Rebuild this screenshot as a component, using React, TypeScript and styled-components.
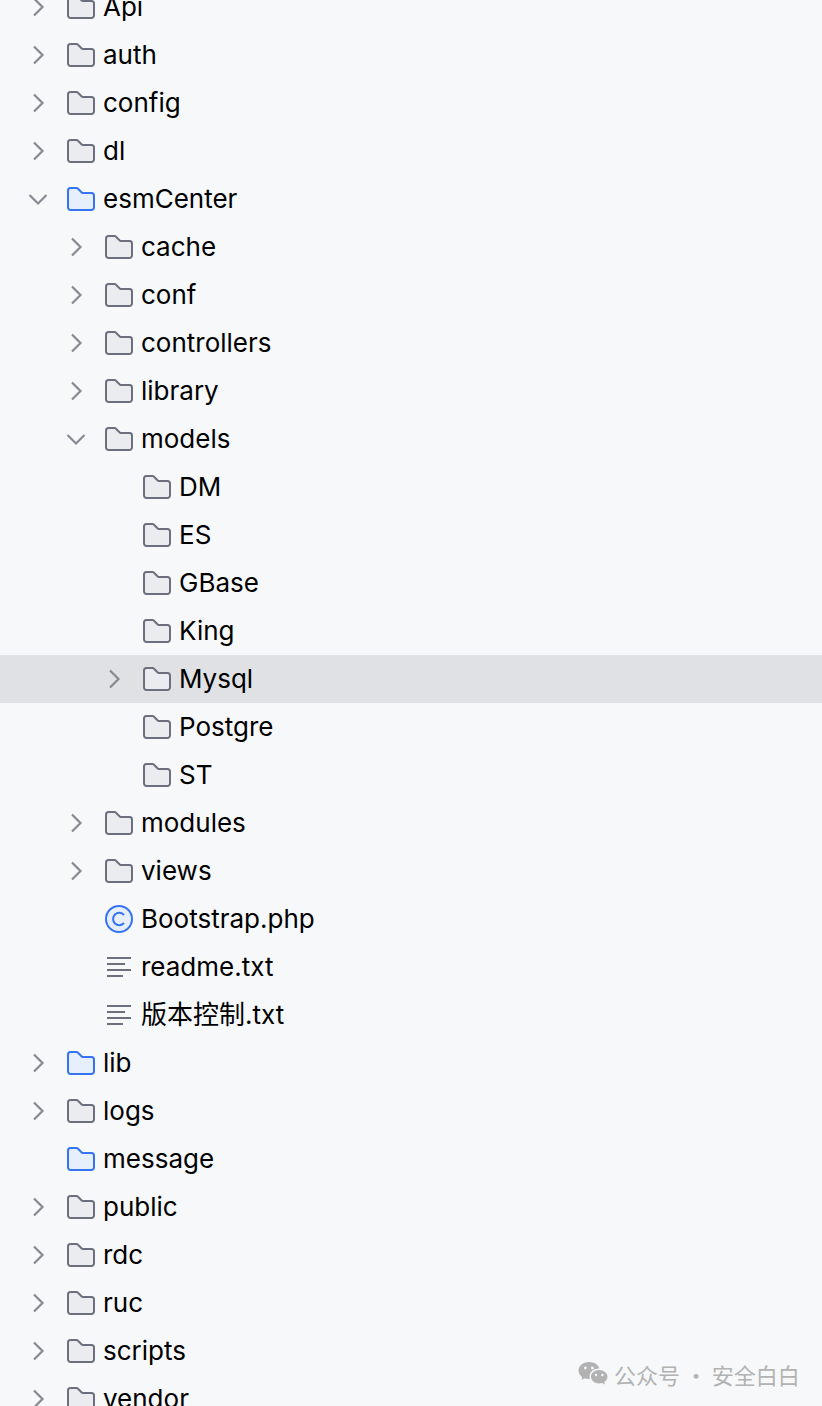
import styled, { createGlobalStyle } from "styled-components";

type Kind = "folder" | "source" | "php" | "text";
type Arrow = "closed" | "open" | "none";

type Item = {
  name: string;
  depth: number;
  arrow: Arrow;
  kind: Kind;
  selected?: boolean;
};

const items: Item[] = [
  { name: "Api", depth: 0, arrow: "closed", kind: "folder" },
  { name: "auth", depth: 0, arrow: "closed", kind: "folder" },
  { name: "config", depth: 0, arrow: "closed", kind: "folder" },
  { name: "dl", depth: 0, arrow: "closed", kind: "folder" },
  { name: "esmCenter", depth: 0, arrow: "open", kind: "source" },
  { name: "cache", depth: 1, arrow: "closed", kind: "folder" },
  { name: "conf", depth: 1, arrow: "closed", kind: "folder" },
  { name: "controllers", depth: 1, arrow: "closed", kind: "folder" },
  { name: "library", depth: 1, arrow: "closed", kind: "folder" },
  { name: "models", depth: 1, arrow: "open", kind: "folder" },
  { name: "DM", depth: 2, arrow: "none", kind: "folder" },
  { name: "ES", depth: 2, arrow: "none", kind: "folder" },
  { name: "GBase", depth: 2, arrow: "none", kind: "folder" },
  { name: "King", depth: 2, arrow: "none", kind: "folder" },
  { name: "Mysql", depth: 2, arrow: "closed", kind: "folder", selected: true },
  { name: "Postgre", depth: 2, arrow: "none", kind: "folder" },
  { name: "ST", depth: 2, arrow: "none", kind: "folder" },
  { name: "modules", depth: 1, arrow: "closed", kind: "folder" },
  { name: "views", depth: 1, arrow: "closed", kind: "folder" },
  { name: "Bootstrap.php", depth: 1, arrow: "none", kind: "php" },
  { name: "readme.txt", depth: 1, arrow: "none", kind: "text" },
  { name: "版本控制.txt", depth: 1, arrow: "none", kind: "text" },
  { name: "lib", depth: 0, arrow: "closed", kind: "source" },
  { name: "logs", depth: 0, arrow: "closed", kind: "folder" },
  { name: "message", depth: 0, arrow: "none", kind: "source" },
  { name: "public", depth: 0, arrow: "closed", kind: "folder" },
  { name: "rdc", depth: 0, arrow: "closed", kind: "folder" },
  { name: "ruc", depth: 0, arrow: "closed", kind: "folder" },
  { name: "scripts", depth: 0, arrow: "closed", kind: "folder" },
  { name: "vendor", depth: 0, arrow: "closed", kind: "folder" },
];

const GlobalStyle = createGlobalStyle`
  html, body {
    margin: 0;
    padding: 0;
    background: #f7f8fa;
  }
`;

const Page = styled.div`
  position: relative;
  width: 822px;
  height: 1406px;
  overflow: hidden;
  background: #f7f8fa;
  font-family: Inter, "Noto Sans CJK SC", sans-serif;
`;

const Tree = styled.div`
  margin-top: -17px;
  display: flex;
  flex-direction: column;
`;

const Row = styled.div<{ $depth: number; $selected?: boolean }>`
  height: 48px;
  display: flex;
  align-items: center;
  padding-left: ${(p) => 24 + p.$depth * 38}px;
  background: ${(p) => (p.$selected ? "#dfe1e5" : "transparent")};
`;

const ArrowSlot = styled.div`
  width: 28px;
  height: 28px;
  margin-right: 14px;
  flex-shrink: 0;
  display: flex;
  align-items: center;
  justify-content: center;
  color: #868a91;
`;

const IconSlot = styled.div`
  width: 30px;
  height: 30px;
  margin-right: 7px;
  flex-shrink: 0;
  display: flex;
  align-items: center;
  justify-content: center;
`;

const Label = styled.span`
  font-size: 26px;
  line-height: 48px;
  color: #000;
  white-space: nowrap;
`;

const Watermark = styled.div`
  position: absolute;
  left: 578px;
  top: 1358px;
  display: flex;
  align-items: center;
  gap: 6px;
  color: #b2b2b2;
  font-size: 22px;
  line-height: 32px;
  font-family: "Noto Sans CJK SC", sans-serif;
  white-space: nowrap;
`;

const ArrowIcon = ({ arrow }: { arrow: Arrow }) => {
  if (arrow === "none") return null;
  return (
    <svg width="28" height="28" viewBox="0 0 28 28" fill="none" stroke="currentColor" strokeWidth="2.2">
      {arrow === "closed" ? <path d="M10 5.5 L18.5 14 L10 22.5" /> : <path d="M5.5 10 L14 18.5 L22.5 10" />}
    </svg>
  );
};

const FolderIcon = ({ source }: { source: boolean }) => (
  <svg width="30" height="30" viewBox="0 0 30 30">
    <path
      d="M2 6.5 A2.5 2.5 0 0 1 4.5 4 H10.5 A2 2 0 0 1 12 4.7 L15.5 8.3 A2 2 0 0 0 17 9 H25.5 A2.5 2.5 0 0 1 28 11.5 V23.5 A2.5 2.5 0 0 1 25.5 26 H4.5 A2.5 2.5 0 0 1 2 23.5 Z"
      fill={source ? "#e7effd" : "#ebecf0"}
      stroke={source ? "#3574f0" : "#6c707e"}
      strokeWidth="2"
      strokeLinejoin="round"
    />
  </svg>
);

const PhpIcon = () => (
  <svg width="30" height="30" viewBox="0 0 30 30" fill="none">
    <circle cx="15" cy="15" r="13" fill="#e7effd" stroke="#3574f0" strokeWidth="2" />
    <path d="M20 11 A6.2 6.2 0 1 0 20 19" stroke="#3574f0" strokeWidth="2" />
  </svg>
);

const TextIcon = () => (
  <svg width="30" height="30" viewBox="0 0 30 30" stroke="#6c707e" strokeWidth="2">
    <path d="M3 6 H27 M3 12 H21 M3 18 H27 M3 24 H19" />
  </svg>
);

const WechatIcon = () => (
  <svg width="30" height="26" viewBox="0 0 30 26" fill="#b2b2b2">
    <path d="M11 1 C5 1 0.5 4.8 0.5 9.5 C0.5 12.2 2 14.5 4.2 16 L3.4 19 L6.8 17.2 C8 17.6 9.4 17.9 11 17.9 C11.3 17.9 11.6 17.9 12 17.8 C11.7 17 11.6 16.2 11.6 15.4 C11.6 11 15.7 7.6 20.8 7.6 C21 7.6 21.2 7.6 21.4 7.6 C20.4 3.8 16.2 1 11 1 Z" />
    <path d="M21 9 C16.5 9 13 12 13 15.7 C13 19.4 16.5 22.4 21 22.4 C22 22.4 23 22.2 24 21.9 L27 23.6 L26.2 20.9 C28.2 19.6 29.5 17.8 29.5 15.7 C29.5 12 25.6 9 21 9 Z" />
    <circle cx="7.4" cy="7" r="1.4" fill="#f7f8fa" />
    <circle cx="14.4" cy="7" r="1.4" fill="#f7f8fa" />
    <circle cx="18" cy="14" r="1.2" fill="#f7f8fa" />
    <circle cx="24.4" cy="14" r="1.2" fill="#f7f8fa" />
  </svg>
);

const FileIcon = ({ kind }: { kind: Kind }) => {
  if (kind === "php") return <PhpIcon />;
  if (kind === "text") return <TextIcon />;
  return <FolderIcon source={kind === "source"} />;
};

const App = () => {
  return (
    <Page>
      <GlobalStyle />
      <Tree>
        {items.map((item) => (
          <Row key={item.name} $depth={item.depth} $selected={item.selected}>
            <ArrowSlot>
              <ArrowIcon arrow={item.arrow} />
            </ArrowSlot>
            <IconSlot>
              <FileIcon kind={item.kind} />
            </IconSlot>
            <Label>{item.name}</Label>
          </Row>
        ))}
      </Tree>
      <Watermark>
        <WechatIcon />
        <span>公众号 · 安全白白</span>
      </Watermark>
    </Page>
  );
};

export default App;
